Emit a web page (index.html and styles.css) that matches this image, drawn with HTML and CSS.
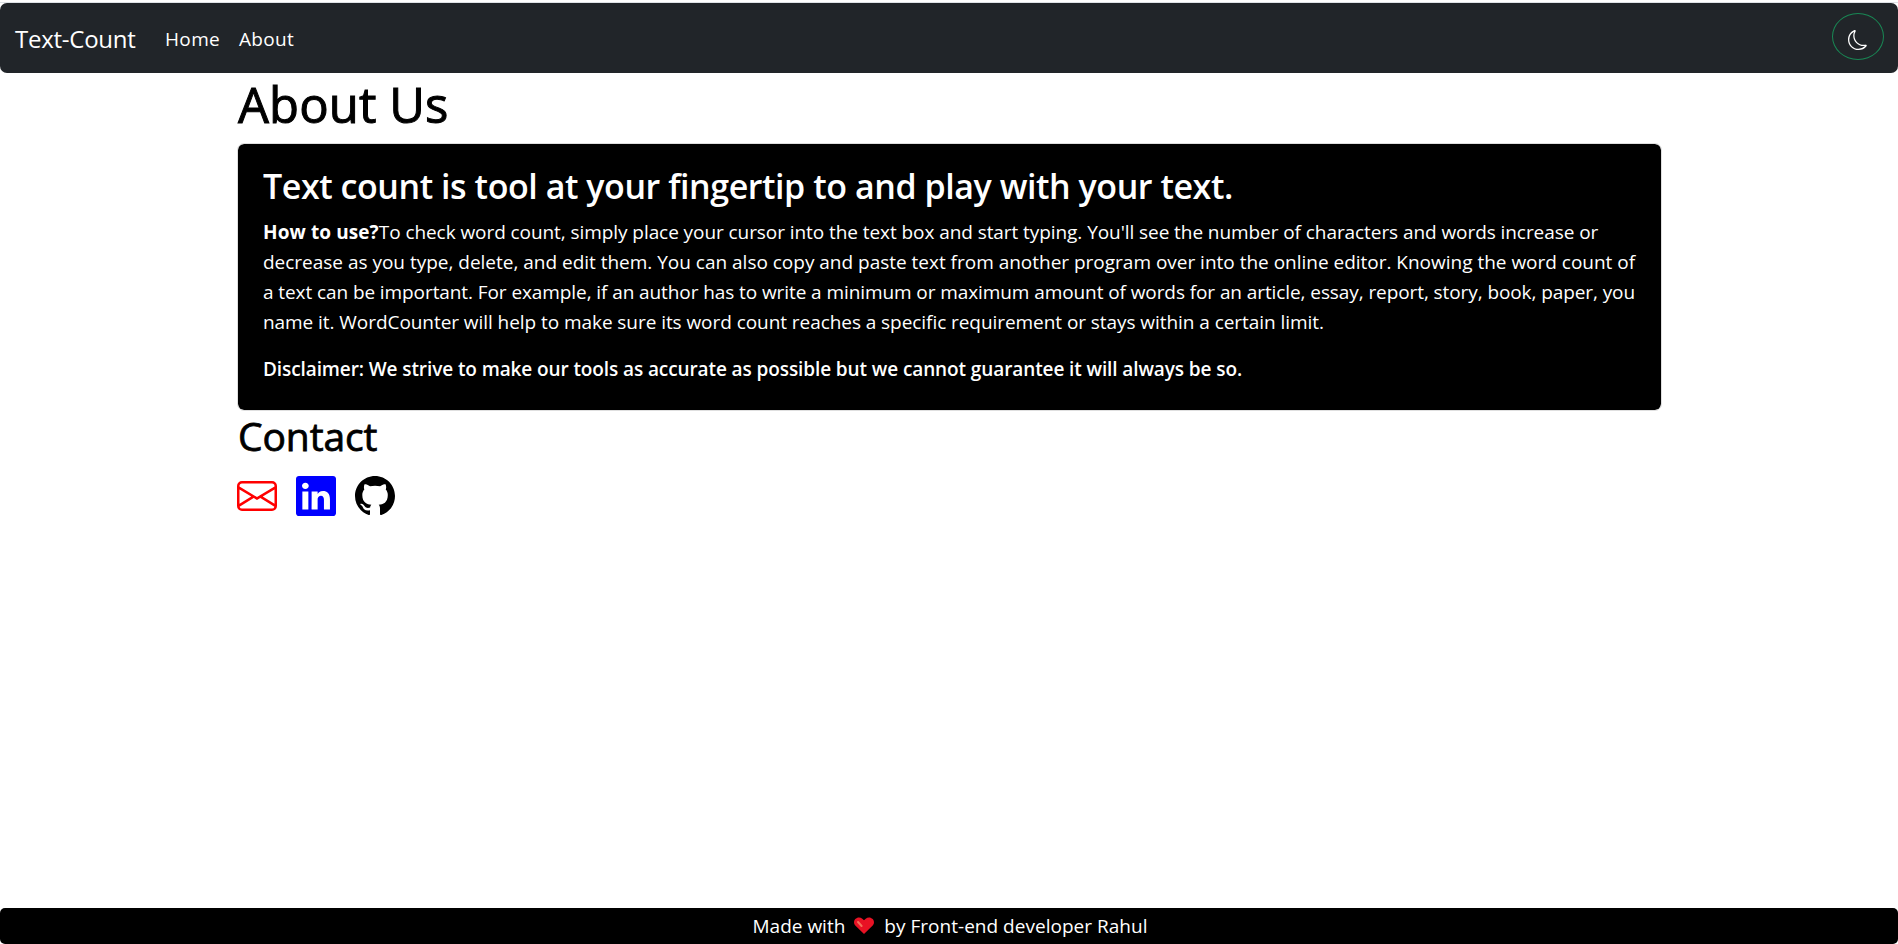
FILE: index.html
```
<!DOCTYPE html>
<html lang="en">
<head>
<meta charset="utf-8">
<title>Text-Count</title>
<link rel="stylesheet" href="styles.css">
</head>
<body>
<nav class="navbar">
  <a class="brand">Text-Count</a>
  <a class="nav-link">Home</a>
  <a class="nav-link">About</a>
  <button class="mode" aria-label="Dark mode"><svg viewBox="0 0 16 16"><path d="M6 .278a.768.768 0 0 1 .08.858 7.208 7.208 0 0 0-.878 3.46c0 4.021 3.278 7.277 7.318 7.277.527 0 1.04-.055 1.533-.16a.787.787 0 0 1 .81.316.733.733 0 0 1-.031.893A8.349 8.349 0 0 1 8.344 16C3.734 16 0 12.286 0 7.71 0 4.266 2.114 1.312 5.124.06A.752.752 0 0 1 6 .278zM4.858 1.311A7.269 7.269 0 0 0 1.025 7.71c0 4.02 3.279 7.276 7.319 7.276a7.316 7.316 0 0 0 5.205-2.162c-.337.042-.68.063-1.029.063-4.61 0-8.343-3.714-8.343-8.29 0-1.167.242-2.278.681-3.286z"/></svg></button>
</nav>
<main class="container">
  <h1 class="title">About Us</h1>
  <section class="card">
    <h2 class="lead">Text count is tool at your fingertip to and play with your text.</h2>
    <p class="body">
      <span class="line l1"><b>How to use?</b>To check word count, simply place your cursor into the text box and start typing. You'll see the number of characters and words increase or</span>
      <span class="line l2">decrease as you type, delete, and edit them. You can also copy and paste text from another program over into the online editor. Knowing the word count of</span>
      <span class="line l3">a text can be important. For example, if an author has to write a minimum or maximum amount of words for an article, essay, report, story, book, paper, you</span>
      <span class="line l4">name it. WordCounter will help to make sure its word count reaches a specific requirement or stays within a certain limit.</span>
    </p>
    <p class="note">Disclaimer: We strive to make our tools as accurate as possible but we cannot guarantee it will always be so.</p>
  </section>
  <h2 class="contact">Contact</h2>
  <div class="icons">
    <svg class="mail" viewBox="0 0 16 16"><path d="M0 4a2 2 0 0 1 2-2h12a2 2 0 0 1 2 2v8a2 2 0 0 1-2 2H2a2 2 0 0 1-2-2V4Zm2-1a1 1 0 0 0-1 1v.217l7 4.2 7-4.2V4a1 1 0 0 0-1-1H2Zm13 2.383-4.708 2.825L15 11.105V5.383Zm-.034 6.876-5.64-3.471L8 9.583l-1.326-.795-5.64 3.47A1 1 0 0 0 2 13h12a1 1 0 0 0 .966-.741ZM1 11.105l4.708-2.897L1 5.383v5.722Z"/></svg>
    <svg class="linkedin" viewBox="0 0 16 16"><path d="M0 1.146C0 .513.526 0 1.175 0h13.65C15.474 0 16 .513 16 1.146v13.708c0 .633-.526 1.146-1.175 1.146H1.175C.526 16 0 15.487 0 14.854V1.146zm4.943 12.248V6.169H2.542v7.225h2.401zm-1.2-8.212c.837 0 1.358-.554 1.358-1.248-.015-.709-.52-1.248-1.342-1.248-.822 0-1.359.54-1.359 1.248 0 .694.521 1.248 1.327 1.248h.016zm4.908 8.212V9.359c0-.216.016-.432.08-.586.173-.431.568-.878 1.232-.878.869 0 1.216.662 1.216 1.634v3.865h2.401V9.25c0-2.22-1.184-3.252-2.764-3.252-1.274 0-1.845.7-2.165 1.193v.025h-.016a5.54 5.54 0 0 1 .016-.025V6.169h-2.4c.03.678 0 7.225 0 7.225h2.4z"/></svg>
    <svg class="github" viewBox="0 0 16 16"><path d="M8 0C3.58 0 0 3.58 0 8c0 3.54 2.29 6.53 5.47 7.59.4.07.55-.17.55-.38 0-.19-.01-.82-.01-1.49-2.01.37-2.53-.49-2.69-.94-.09-.23-.48-.94-.82-1.13-.28-.15-.68-.52-.01-.53.63-.01 1.08.58 1.23.82.72 1.21 1.87.87 2.33.66.07-.52.28-.87.51-1.07-1.78-.2-3.64-.89-3.64-3.95 0-.87.31-1.59.82-2.15-.08-.2-.36-1.02.08-2.12 0 0 .67-.21 2.2.82.64-.18 1.32-.27 2-.27.68 0 1.36.09 2 .27 1.53-1.04 2.2-.82 2.2-.82.44 1.1.16 1.92.08 2.12.51.56.82 1.27.82 2.15 0 3.07-1.87 3.75-3.65 3.95.29.25.54.73.54 1.48 0 1.07-.01 1.93-.01 2.2 0 .21.15.46.55.38A8.012 8.012 0 0 0 16 8c0-4.42-3.58-8-8-8z"/></svg>
  </div>
</main>
<footer class="footer">
  <span>Made with</span>
  <svg class="heart" viewBox="0 0 20 17"><path fill="#e81224" d="M10 17 1.3 8.6C-.4 6.900-.4 3.800 1.300 2 3.200 0 6.300-.1 8.300 1.700L10 3.300l1.700-1.600c2-1.800 5.100-1.700 7 .3 1.700 1.800 1.700 4.900 0 6.600z"/><path d="M4 5 7.600 9" stroke="#f4715a" stroke-width="2" stroke-linecap="round"/></svg>
  <span class="credit">by Front-end developer Rahul</span>
</footer>
</body>
</html>
```
FILE: styles.css
```
* { box-sizing: border-box; margin: 0; padding: 0; }
body { height: 944px; display: flex; flex-direction: column; padding-top: 2px; background: #fff; color: #000; font: 19px/30px "Open Sans", "Noto Sans", sans-serif; white-space: nowrap; overflow: hidden; }
body::before { content: ""; height: 1px; background: #dee2e6; flex: none; }
.navbar { flex: none; height: 70px; border-radius: 7px; background: #212529; color: #fff; display: flex; align-items: center; padding: 1px 14px 0 15px; }
.brand { width: 150px; font-size: 24px; letter-spacing: -.25px; }
.nav-link { width: 74px; letter-spacing: .35px; }
.mode { display: flex; align-items: center; justify-content: center; margin: 0 0 4px auto; padding-top: 7px; width: 52px; height: 47px; border: 1px solid #198754; border-radius: 50%; background: none; }
.mode svg { width: 20px; height: 20px; fill: #fff; }
.container { width: 1662px; padding-left: 237px; flex: 1; }
.title { margin-top: 1px; padding-left: 1px; font-size: 49px; line-height: 60px; font-weight: 400; letter-spacing: .1px; -webkit-text-stroke: 1px #000; }
.card { margin-top: 9px; border: 1px solid #dfdfdf; border-radius: 7px; background: #000; background-clip: padding-box; color: #fff; padding: 21px 25px 26px; }
.lead { margin-bottom: 10px; font-size: 34px; line-height: 42px; font-weight: 600; letter-spacing: -.44px; }
.line { display: block; }
.l1 { letter-spacing: -.07px; }
.l1 b { letter-spacing: .1px; }
.l2 { letter-spacing: -.012px; }
.l3 { letter-spacing: -.086px; }
.l4 { letter-spacing: -.06px; }
.note { margin-top: 17px; font-weight: 600; letter-spacing: -.1px; }
.contact { margin-top: 1px; padding-left: 1px; font-size: 39px; line-height: 48px; font-weight: 400; letter-spacing: -.1px; -webkit-text-stroke: .8px #000; }
.icons { display: flex; gap: 19px; margin-top: 16px; }
.icons svg { width: 40px; height: 40px; }
.mail { fill: #f00; }
.linkedin { fill: #00f; }
.github { fill: #000; }
.footer { flex: none; background: #000; color: #fff; height: 36px; padding: 3px 0 0 2px; border-radius: 5px; display: flex; justify-content: center; }
.heart { width: 20px; height: 17px; margin: 6px 10px 0 9px; fill: none; }
.credit { letter-spacing: .02px; }
```
